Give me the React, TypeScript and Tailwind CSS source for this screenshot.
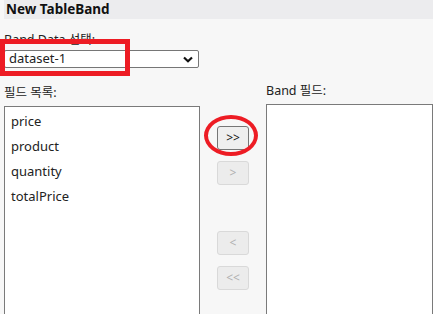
const font = { fontFamily: '"Noto Sans", "Noto Sans CJK KR", sans-serif' };

const fields = ["price", "product", "quantity", "totalPrice"];

function MoveButton({ label, active }: { label: string; active?: boolean }) {
  return (
    <button
      type="button"
      className={`w-[32px] h-[24px] rounded-[3px] border text-[12px] leading-none flex items-center justify-center ${
        active
          ? "bg-[#efefef] border-[#767676] text-[#111]"
          : "bg-[#ececec] border-[#d9d9d9] text-[#b0b0b0]"
      }`}
    >
      {label}
    </button>
  );
}

export default function App() {
  return (
    <div
      className="relative w-[433px] h-[314px] overflow-hidden bg-[#f7f7f7] text-[#222]"
      style={font}
    >
      <div className="ml-[4px] h-[19px] bg-[#ececee] pl-[2px] text-[13.5px] font-bold leading-[19px] text-[#111]">
        New TableBand
      </div>

      <div className="pl-[4px]">
        <div className="mt-[11px] h-[20px] text-[12.5px] leading-[20px] text-[#222]">
          Band Data 선택:
        </div>
        <div className="w-[195px] h-[18px] border border-[#767676] rounded-[2px] bg-white flex items-center justify-between pl-[4px] pr-[5px] text-[13px]">
          <span>dataset-1</span>
          <svg width="10" height="7" viewBox="0 0 10 7">
            <path d="M1 1.5 L5 5.2 L9 1.5" fill="none" stroke="#111" strokeWidth="2.2" />
          </svg>
        </div>

        <div className="flex mt-[16px]">
          <div className="flex flex-col w-[196px]">
            <div className="h-[22px] text-[12.5px] leading-[18px]">필드 목록:</div>
            <div className="h-[220px] border border-[#7a7a7a] bg-white pt-[2px] pl-[6px] text-[13px]">
              {fields.map((f) => (
                <div key={f} className="h-[25px] leading-[25px]">
                  {f}
                </div>
              ))}
            </div>
          </div>

          <div className="w-[66px] flex flex-col items-center pt-[42px] gap-[11px]">
            <MoveButton label=">>" active />
            <MoveButton label=">" />
            <div className="h-[24px]" />
            <MoveButton label="<" />
            <MoveButton label="<<" />
          </div>

          <div className="flex flex-col flex-1 -mt-[2px]">
            <div className="h-[22px] text-[12.5px] leading-[18px]">Band 필드:</div>
            <div className="h-[220px] border border-[#7a7a7a] bg-white" />
          </div>
        </div>
      </div>

      <div className="absolute left-0 top-[39px] w-[130px] h-[37px] border-[5px] border-[#ed1c24]" />
      <div className="absolute left-[204px] top-[115px] w-[54px] h-[41px] rounded-[50%] border-[4px] border-[#ed1c24]" />
    </div>
  );
}
